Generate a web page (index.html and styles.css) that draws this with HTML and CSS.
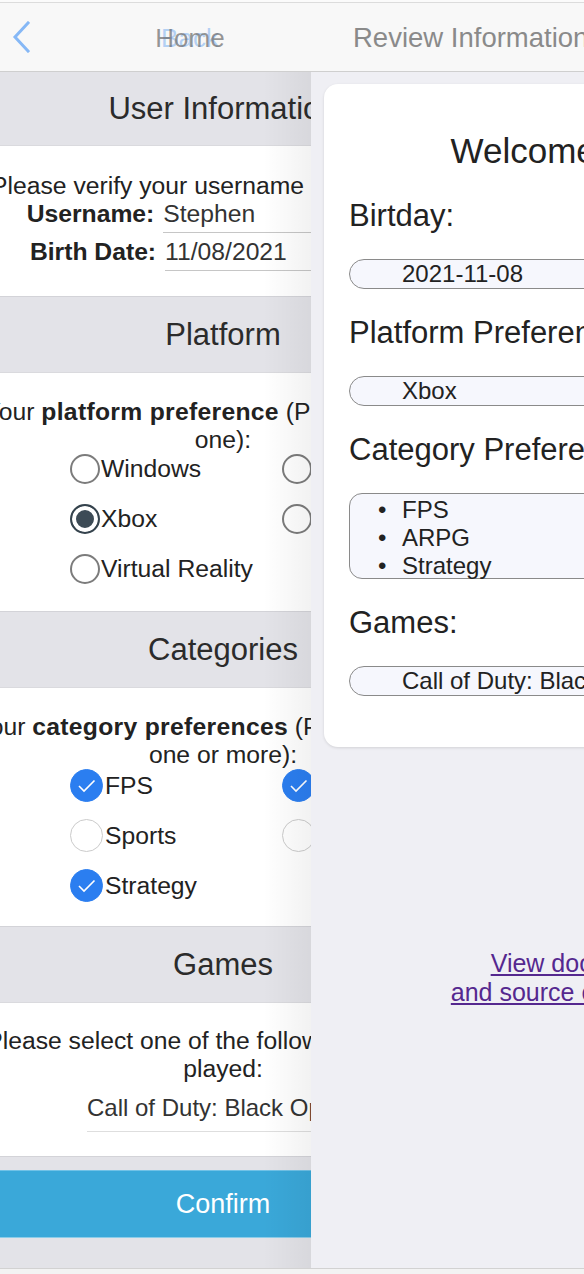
FILE: index.html
```html
<!DOCTYPE html>
<html lang="en">
<head>
<meta charset="utf-8">
<title>Review Information</title>
<link rel="stylesheet" href="styles.css">
</head>
<body>
<div class="screen">
  <div class="topstrip"></div>
  <header class="nav">
    <svg class="chev" width="18" height="32" viewBox="0 0 18 32" aria-hidden="true"><path d="M16 2 L3 16 L16 30" fill="none" stroke="#86b8f6" stroke-width="3" stroke-linecap="square"/></svg>
    <div class="navback"><span class="back">Back</span><span class="home">Home</span></div>
    <div class="navtitle">Review Information</div>
  </header>
  <main class="stage">
    <section class="pane pane-prev">
      <div class="page page-prev">
        <h2 class="band band-first">User Information</h2>
        <div class="block block-user">
          <p class="lead">Please verify your username and birthdate</p>
          <div class="field"><span class="flabel">Username:</span><span class="finput finput-user">Stephen</span></div>
          <div class="field"><span class="flabel">Birth Date:</span><span class="finput finput-date">11/08/2021</span></div>
        </div>
        <h2 class="band">Platform</h2>
        <div class="block block-platform">
          <p class="lead">Your <b>platform preference</b> (Please select a<br>one):</p>
          <div class="opts opts-radio">
            <label class="opt"><span class="radio"></span>Windows</label>
            <label class="opt"><span class="radio"></span>PlayStation</label>
            <label class="opt"><span class="radio on"></span>Xbox</label>
            <label class="opt"><span class="radio"></span>Nintendo</label>
            <label class="opt"><span class="radio"></span>Virtual Reality</label>
          </div>
        </div>
        <h2 class="band">Categories</h2>
        <div class="block block-cat">
          <p class="lead">Your <b>category preferences</b> (Please indicate<br>one or more):</p>
          <div class="opts opts-check">
            <label class="opt"><span class="check on"><svg width="33" height="33" viewBox="0 0 33 33"><path d="M9 17 L14 22 L24.5 11.5" fill="none" stroke="#fff" stroke-width="1.6"/></svg></span>FPS</label>
            <label class="opt"><span class="check on"><svg width="33" height="33" viewBox="0 0 33 33"><path d="M9 17 L14 22 L24.5 11.5" fill="none" stroke="#fff" stroke-width="1.6"/></svg></span>ARPG</label>
            <label class="opt"><span class="check"></span>Sports</label>
            <label class="opt"><span class="check"></span>Racing</label>
            <label class="opt"><span class="check on"><svg width="33" height="33" viewBox="0 0 33 33"><path d="M9 17 L14 22 L24.5 11.5" fill="none" stroke="#fff" stroke-width="1.6"/></svg></span>Strategy</label>
          </div>
        </div>
        <h2 class="band">Games</h2>
        <div class="block block-games">
          <p class="lead">Please select one of the following you have<br>played:</p>
          <div class="select">Call of Duty: Black Ops Cold War</div>
        </div>
        <div class="actions"><div class="confirm">Confirm</div></div>
      </div>
    </section>
    <section class="pane pane-next">
      <div class="page page-next">
        <div class="card">
          <h1 class="welcome">Welcome, Stephen!</h1>
          <h3 class="rlabel">Birtday:</h3>
          <div class="pill">2021-11-08</div>
          <h3 class="rlabel">Platform Preference:</h3>
          <div class="pill">Xbox</div>
          <h3 class="rlabel">Category Preference:</h3>
          <div class="listbox">
            <ul>
              <li>FPS</li>
              <li>ARPG</li>
              <li>Strategy</li>
            </ul>
          </div>
          <h3 class="rlabel">Games:</h3>
          <div class="pill">Call of Duty: Black Ops Cold War</div>
        </div>
        <p class="doclink"><a href="#">View documentation<br>and source code on GitHub</a></p>
      </div>
    </section>
  </main>
  <div class="bottombar"></div>
</div>
</body>
</html>
```

FILE: styles.css
```css
html, body {
  margin: 0;
  padding: 0;
}
body {
  background: #f4f4f4;
  font-family: "Liberation Sans", Arial, sans-serif;
  color: #222;
}
.screen {
  width: 584px;
  height: 1274px;
  display: flex;
  flex-direction: column;
  overflow: hidden;
}
.topstrip {
  height: 2px;
  background: #fbfbfb;
  border-bottom: 1px solid #dcdcdc;
  flex: none;
}
.nav {
  flex: none;
  height: 68px;
  border-bottom: 1px solid #cfcfcf;
  background: #f8f8f8;
  display: flex;
  align-items: center;
  white-space: nowrap;
}
.chev {
  margin-left: 12px;
  flex: none;
}
.navback {
  display: grid;
  justify-items: center;
  width: 70px;
  margin-left: 125px;
  flex: none;
  font-size: 26px;
  padding-top: 2px;
}
.navback span {
  grid-area: 1 / 1;
}
.back {
  color: rgba(110, 168, 238, 0.5);
}
.home {
  color: rgba(110, 110, 110, 0.72);
}
.navtitle {
  margin-left: 128px;
  font-size: 27.5px;
  color: #8a8a8a;
  flex: none;
  padding-top: 2px;
}
.stage {
  flex: none;
  height: 1196px;
  display: flex;
  border-bottom: 1px solid #d2d2d2;
}
.bottombar {
  flex: 1;
  background: #f3f3f3;
}
.pane {
  overflow: hidden;
  height: 100%;
}
.pane-prev {
  width: 311px;
  flex: none;
  position: relative;
}
.pane-prev::after {
  content: "";
  position: absolute;
  top: 0;
  right: 0;
  bottom: 0;
  width: 48px;
  background: linear-gradient(to right, rgba(0, 0, 0, 0), rgba(0, 0, 0, 0.05));
  pointer-events: none;
}
.page-prev {
  width: 584px;
  margin-left: -69px;
  height: 100%;
  background: #e3e3e8;
}
.band {
  margin: 0;
  height: 75px;
  display: flex;
  align-items: center;
  justify-content: center;
  font-size: 31px;
  font-weight: normal;
  color: #2b2b2b;
  background: #e3e3e8;
  white-space: nowrap;
}
.band-first {
  height: 73px;
}
.block {
  background: #fff;
  border-top: 1px solid #dadade;
  border-bottom: 1px solid #d3d3d8;
  text-align: center;
  font-size: 24.7px;
  color: #222;
  padding-left: 20px;
  padding-right: 20px;
}
.lead {
  margin: 0;
  line-height: 28px;
  white-space: nowrap;
}
.lead b {
  letter-spacing: 0.3px;
}
.block-user {
  padding-top: 26px;
  padding-bottom: 25px;
}
.field {
  display: flex;
  justify-content: center;
  align-items: flex-start;
  gap: 9px;
  line-height: 28px;
}
.field + .field {
  margin-top: 5px;
}
.flabel {
  font-weight: bold;
  white-space: nowrap;
}
.finput {
  flex: none;
  text-align: left;
  padding-bottom: 4px;
  border-bottom: 1px solid #c6c6c6;
  color: #333;
}
.finput-user {
  width: 256px;
}
.finput-date {
  width: 251px;
}
.block-platform {
  padding-top: 25px;
  padding-bottom: 27px;
}
.block-cat {
  padding-top: 25px;
  padding-bottom: 24px;
}
.block-games {
  padding-top: 24px;
  padding-bottom: 24px;
}
.opts {
  display: grid;
  grid-template-columns: 212px 212px;
  margin-left: 119px;
  text-align: left;
}
.opts-radio {
  row-gap: 20px;
}
.opts-check {
  row-gap: 17px;
}
.opt {
  display: flex;
  align-items: center;
  white-space: nowrap;
  line-height: 28px;
}
.opts-radio .opt {
  height: 30px;
}
.opts-check .opt {
  height: 33px;
}
.radio {
  width: 30px;
  height: 30px;
  box-sizing: border-box;
  border: 2px solid #7c7c7c;
  border-radius: 50%;
  flex: none;
  margin-right: 1px;
  background: #fff;
}
.radio.on {
  border-color: #35434d;
  background: #3d4b56;
  box-shadow: inset 0 0 0 4px #fff;
}
.check {
  width: 33px;
  height: 33px;
  box-sizing: border-box;
  border: 1px solid #cbcbcb;
  border-radius: 50%;
  flex: none;
  margin-right: 2px;
  background: #fff;
  display: flex;
  align-items: center;
  justify-content: center;
}
.check.on {
  background: #2b7ef0;
  border-color: #2b7ef0;
}
.check svg {
  display: block;
  flex: none;
}
.select {
  width: 272px;
  margin: 11px auto 0;
  text-align: left;
  font-size: 24px;
  line-height: 28px;
  padding-bottom: 9px;
  border-bottom: 1px solid #dedede;
  white-space: nowrap;
  overflow: hidden;
  color: #333;
}
.actions {
  padding-top: 13px;
}
.confirm {
  height: 68px;
  box-sizing: border-box;
  background: #3aa8d9;
  border-top: 1px solid #71c2e7;
  border-bottom: 1px solid #8ccde9;
  color: #fff;
  font-size: 27px;
  display: flex;
  align-items: center;
  justify-content: center;
}
.pane-next {
  flex: 1;
  background: #efeff4;
}
.page-next {
  width: 584px;
  padding-top: 12px;
}
.card {
  margin: 0 13px;
  background: #fff;
  border-radius: 14px;
  box-shadow: 0 1px 3px rgba(0, 0, 0, 0.12);
  padding: 46px 25px 51px;
}
.welcome {
  margin: 0;
  font-size: 35px;
  line-height: 42px;
  font-weight: normal;
  text-align: center;
  color: #222;
  white-space: nowrap;
}
.rlabel {
  margin: 26px 0 0;
  font-size: 31px;
  line-height: 36px;
  font-weight: normal;
  color: #222;
  white-space: nowrap;
}
.pill {
  margin-top: 25px;
  height: 30px;
  box-sizing: border-box;
  border: 1px solid #8a8a8a;
  border-radius: 15px;
  background: #f6f7fd;
  padding-left: 52px;
  font-size: 24px;
  line-height: 28px;
  color: #222;
  white-space: nowrap;
  overflow: hidden;
}
.listbox {
  margin-top: 25px;
  height: 86px;
  box-sizing: border-box;
  border: 1px solid #8a8a8a;
  border-radius: 13px;
  background: #f6f7fd;
}
.listbox ul {
  margin: 0;
  padding: 2px 0 0 52px;
  font-size: 24px;
  line-height: 28px;
  color: #222;
  list-style: none;
}
.listbox li::before {
  content: "\2022";
  display: inline-block;
  width: 24px;
  margin-left: -24px;
}
.doclink {
  margin: 202px 0 0;
  text-align: center;
  font-size: 25px;
  line-height: 29px;
  white-space: nowrap;
}
.doclink a {
  color: #55288f;
  text-decoration: underline;
}
```
